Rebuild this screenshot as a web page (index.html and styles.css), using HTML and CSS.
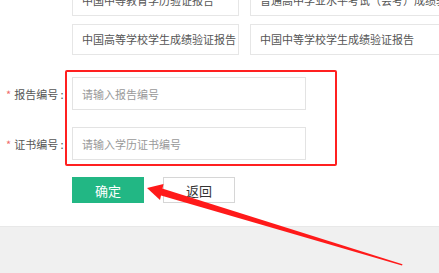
FILE: index.html
```html
<!DOCTYPE html>
<html>
<head>
  <meta charset="utf-8">
  <title>验证报告查询</title>
  <link rel="stylesheet" href="styles.css">
</head>
<body>
  <div class="page">
    <div class="types">
      <div class="type">中国中等教育学历验证报告</div>
      <div class="type type-wide">普通高中学业水平考试（会考）成绩验证报告</div>
      <div class="type">中国高等学校学生成绩验证报告</div>
      <div class="type type-wide">中国中等学校学生成绩验证报告</div>
    </div>

    <div class="form">
      <div class="row">
        <label class="label"><span class="star">*</span>报告编号 :</label>
        <input class="field" type="text" placeholder="请输入报告编号">
      </div>
      <div class="row">
        <label class="label"><span class="star">*</span>证书编号 :</label>
        <input class="field" type="text" placeholder="请输入学历证书编号">
      </div>
      <div class="actions">
        <button class="btn btn-ok">确定</button>
        <button class="btn btn-back">返回</button>
      </div>
    </div>

    <div class="footer"></div>

    <!-- annotation -->
    <div class="mark"></div>
    <svg class="arrow" width="439" height="273" viewBox="0 0 439 273">
      <polygon points="147,188 163.5,184 160,200" fill="#ff1a1a"/>
      <polygon points="159,187.5 161,195.5 402,265.5 402.5,264.3" fill="#ff1a1a"/>
    </svg>
  </div>
</body>
</html>
```

FILE: styles.css
```css
body {
  margin: 0;
  background: #fff;
  font-family: "Noto Sans CJK SC", "Noto Sans", sans-serif;
  font-size: 11px;
  color: #555;
}

.page {
  position: relative;
  width: 439px;
  height: 273px;
  overflow: hidden;
}

.types {
  display: grid;
  grid-template-columns: 167px 210px;
  column-gap: 11px;
  row-gap: 8px;
  padding-left: 72px;
  margin-top: -15px;
}

.type {
  height: 31px;
  line-height: 29px;
  box-sizing: border-box;
  border: 1px solid #e6e6e6;
  padding-left: 9px;
  white-space: nowrap;
  overflow: hidden;
  color: #555;
}

.form {
  padding-top: 22px;
}

.row {
  display: flex;
  align-items: center;
  margin-bottom: 17px;
}

.label {
  width: 72px;
  box-sizing: border-box;
  padding-left: 6px;
  color: #555;
  white-space: nowrap;
}

.star {
  color: #f06a6a;
  margin-right: 3px;
}

.field {
  width: 234px;
  height: 33px;
  box-sizing: border-box;
  border: 1px solid #e3e3e3;
  padding: 0 9px;
  font-family: inherit;
  font-size: 11px;
  outline: none;
}

.field::placeholder {
  color: #999;
}

.actions {
  display: flex;
  gap: 19px;
  padding-left: 72px;
}

.btn {
  width: 72px;
  height: 26px;
  box-sizing: border-box;
  font-family: inherit;
  font-size: 13px;
  padding: 0;
}

.btn-ok {
  background: #22b784;
  border: 1px solid #22b784;
  color: #fff;
}

.btn-back {
  background: #fff;
  border: 1px solid #d6d6d6;
  color: #333;
}

.footer {
  margin-top: 23px;
  height: 60px;
  background: #f0f0f0;
  border-top: 1px solid #e8e8e8;
}

.mark {
  position: absolute;
  left: 65px;
  top: 70px;
  width: 268px;
  height: 92px;
  border: 2px solid #ff2020;
  border-radius: 2px;
}

.arrow {
  position: absolute;
  left: 0;
  top: 0;
}
```
